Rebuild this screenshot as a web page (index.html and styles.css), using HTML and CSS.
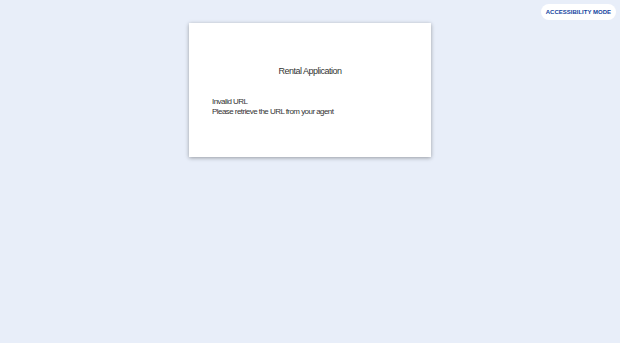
FILE: index.html
```html
<!DOCTYPE html>
<html lang="en">
  <head>
    <meta charset="UTF-8" />
    <meta name="viewport" content="width=device-width, initial-scale=1.0" />
    <title>Rental Application</title>
    <link rel="stylesheet" href="styles.css">
  </head>
  <body>
    <button class="a11y">ACCESSIBILITY MODE</button>
    <div class="page">
      <div class="card">
        <h1 class="title">Rental Application</h1>
        <div class="message">
          <p>Invalid URL</p>
          <p>Please retrieve the URL from your agent</p>
        </div>
      </div>
    </div>
  </body>
</html>
```

FILE: styles.css
```css
* {
  padding: 0;
  margin: 0;
  box-sizing: border-box;
}

body {
  background: #e8eef9;
  font-family: "Liberation Sans", Arial, sans-serif;
  color: #333;
  height: 343px;
}

.page {
  display: flex;
  justify-content: center;
  padding-top: 23px;
}

.card {
  width: 242px;
  height: 134px;
  background: #fff;
  box-shadow: 0 1px 4px rgba(0, 0, 0, 0.35);
  padding: 42px 23px 0;
}

.title {
  font-size: 9px;
  font-weight: normal;
  text-align: center;
  line-height: 12px;
  letter-spacing: -0.5px;
}

.message {
  margin-top: 20px;
  font-size: 8px;
  line-height: 10px;
  letter-spacing: -0.55px;
}

.a11y {
  position: absolute;
  top: 4px;
  right: 4px;
  height: 16px;
  padding: 0 5px;
  border: none;
  border-radius: 8px;
  background: #fff;
  color: #123f9e;
  font-family: "Liberation Sans", Arial, sans-serif;
  font-size: 6px;
  font-weight: bold;
}
```
